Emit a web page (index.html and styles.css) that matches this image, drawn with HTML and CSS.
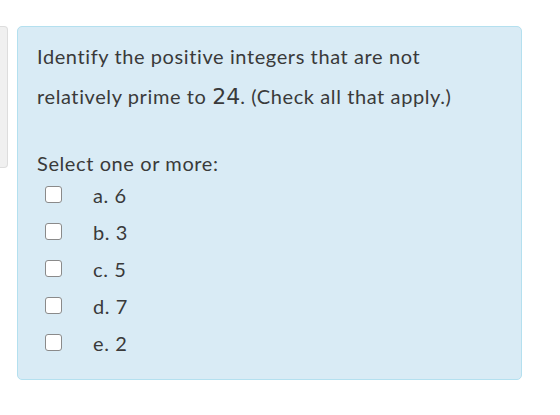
FILE: index.html
```html
<!DOCTYPE html>
<html lang="en">
<head>
<meta charset="utf-8">
<title>Question</title>
<link rel="stylesheet" href="styles.css">
</head>
<body>
<div class="que">
  <div class="info"></div>
  <div class="formulation">
    <div class="qtext">Identify the positive integers that are not<br>relatively prime to <span class="math">24</span>. (Check all that apply.)</div>
    <div class="ablock">
      <div class="prompt">Select one or more:</div>
      <div class="answer">
        <label class="opt"><span class="box"></span><span class="lbl">a. 6</span></label>
        <label class="opt"><span class="box"></span><span class="lbl">b. 3</span></label>
        <label class="opt"><span class="box"></span><span class="lbl">c. 5</span></label>
        <label class="opt"><span class="box"></span><span class="lbl">d. 7</span></label>
        <label class="opt"><span class="box"></span><span class="lbl">e. 2</span></label>
      </div>
    </div>
  </div>
</div>
</body>
</html>
```

FILE: styles.css
```css
html, body {
  margin: 0;
  padding: 0;
  background: #ffffff;
}

body {
  font-family: Lato, "Open Sans", sans-serif;
  color: #3a3a3a;
  letter-spacing: 0.6px;
}

.que {
  display: flex;
  align-items: flex-start;
  padding-top: 26px;
}

.info {
  width: 8px;
  height: 142px;
  box-sizing: border-box;
  background: #f0f0f0;
  border: 1px solid #dddddd;
  border-left: none;
  border-radius: 0 4px 4px 0;
}

.formulation {
  margin-left: 9px;
  width: 505px;
  height: 354px;
  box-sizing: border-box;
  background: #d9ebf5;
  border: 1px solid #b4e0ef;
  border-radius: 5px;
  padding: 9px 19px 0 19px;
}

.qtext {
  font-size: 20px;
  line-height: 40px;
  width: 440px;
}

.math {
  font-family: "DejaVu Sans", sans-serif;
  font-size: 22px;
  line-height: 1;
  letter-spacing: 0;
}

.ablock {
  margin-top: 32px;
}

.prompt {
  font-size: 20px;
  line-height: 30px;
}

.answer {
  display: flex;
  flex-direction: column;
  margin-top: -2px;
  padding-left: 7px;
}

.opt {
  display: flex;
  align-items: center;
  height: 37px;
  font-size: 20px;
}

.box {
  width: 17px;
  height: 17px;
  box-sizing: border-box;
  background: #ffffff;
  border: 1.5px solid #8a8a8a;
  border-radius: 3px;
  margin-left: 1px;
  margin-right: 31px;
}
```
